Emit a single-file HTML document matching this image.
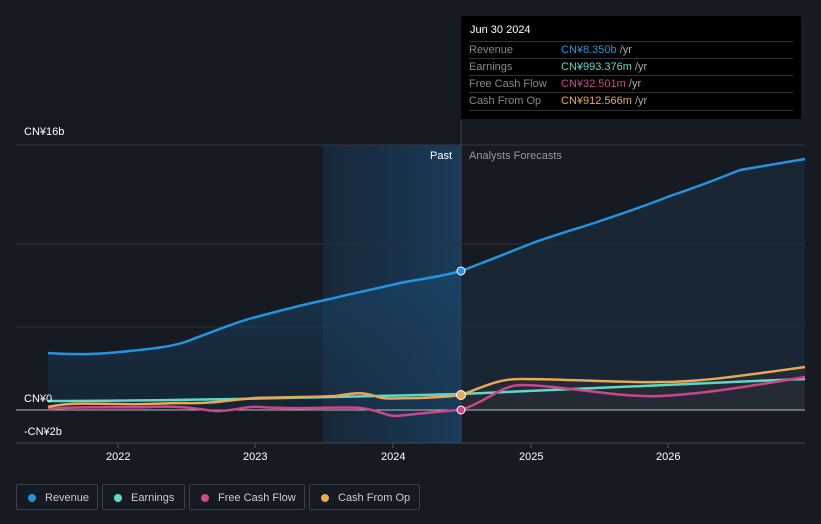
<!DOCTYPE html>
<html><head><meta charset="utf-8"><style>
body{margin:0;width:821px;height:524px;background:#151a23;font-family:"Liberation Sans",sans-serif;overflow:hidden;position:relative}
.t{position:absolute;font-size:11px;color:#fff}
.tip{position:absolute;left:461px;top:16px;width:340px;height:103px;background:#000;border-radius:2px}
.tip .h{position:absolute;left:9px;top:8px;font-size:11px;color:#fff}
.row{position:absolute;left:8px;width:324px;height:17px;border-top:1px solid #333;font-size:11px;line-height:17px;color:#888}
.row span{position:absolute;left:92px}
.row i{font-style:normal;color:#aaa}
.lg{position:absolute;top:484px;height:26px;border:1px solid #3a3f4a;border-radius:2px;font-size:11px;color:#ccc;line-height:26px;box-sizing:border-box}
.lg b{position:absolute;left:11px;top:9px;width:8px;height:8px;border-radius:50%}
.lg span{position:absolute;left:28px}
</style></head><body>
<svg width="821" height="524" style="position:absolute;left:0;top:0">
<defs><linearGradient id="g" x1="0" y1="0" x2="0" y2="1"><stop offset="0" stop-color="#1a4a70" stop-opacity=".55"/><stop offset="1" stop-color="#1a3a58" stop-opacity=".3"/></linearGradient>
<linearGradient id="pg" x1="0" y1="0" x2="1" y2="0"><stop offset="0" stop-color="#1a3550" stop-opacity=".5"/><stop offset="1" stop-color="#1a4468" stop-opacity=".8"/></linearGradient></defs>
<rect x="323" y="145" width="138" height="298" fill="url(#pg)"/>
<line x1="16" y1="145" x2="805" y2="145" stroke="#333a46"/>
<line x1="16" y1="244" x2="805" y2="244" stroke="#2a303b"/>
<line x1="16" y1="327" x2="805" y2="327" stroke="#2a303b"/>
<line x1="461" y1="120" x2="461" y2="443" stroke="#3a4250"/>
<path d="M48,353 C80,355 100,354 120,352 C150,349 170,347 185,342 C210,333 235,322 260,316 C290,308 320,301 330,299 C350,294 370,290 400,283 C420,279 440,277 461,271 L461,410 L48,410 Z" fill="url(#g)"/>
<path d="M461,271 C490,260 510,252 530,244 C560,233 580,228 600,221 C630,211 650,204 670,196 C700,186 720,178 740,170 L805,159 L805,410 L461,410Z" fill="#1c2e40" opacity=".6"/>
<path d="M461,395 C500,380 540,378 580,380 C660,383 700,382 740,376 C770,372 790,370 805,367 L805,410 L461,410Z" fill="#2a2e36" opacity=".7"/>
<line x1="16" y1="410" x2="805" y2="410" stroke="#bbb" stroke-width="1"/>
<line x1="16" y1="443" x2="805" y2="443" stroke="#444a55"/>
<g stroke="#555" ><line x1="118" y1="443" x2="118" y2="448"/><line x1="255" y1="443" x2="255" y2="448"/><line x1="393" y1="443" x2="393" y2="448"/><line x1="531" y1="443" x2="531" y2="448"/><line x1="668" y1="443" x2="668" y2="448"/></g>
<g fill="none" stroke-width="2.5">
<path d="M48,353 C80,355 100,354 120,352 C150,349 170,347 185,342 C210,333 235,322 260,316 C290,308 320,301 330,299 C350,294 370,290 400,283 C420,279 440,277 461,271 C490,260 510,252 530,244 C560,233 580,228 600,221 C630,211 650,204 670,196 C700,186 720,178 740,170 L805,159" stroke="#2394df"/>
<path d="M48,401 C150,401 300,398 461,394 C600,388 700,383 805,379" stroke="#5fd8c6"/>
<path d="M48,409 C80,406 120,408 150,407 C190,405 210,412 220,411 C240,410 245,406 260,407 C300,410 340,406 360,408 C380,410 385,416 395,416 C420,414 440,411 461,410 C490,400 500,386 520,385 C560,385 620,398 660,396 C700,394 740,388 805,377" stroke="#c9478a"/>
<path d="M48,407 C70,402 90,404 120,404 C150,405 160,403 185,403 C210,404 230,400 255,398 C290,397 320,397 335,396 C350,394 360,391 375,396 C385,400 395,398 420,398 C440,397 455,396 461,395 C490,384 500,379 520,379 C570,379 620,383 660,382 C700,382 740,376 805,367" stroke="#e8a857"/>
</g>
<circle cx="461" cy="271" r="4" fill="#2394df" stroke="#fff" stroke-width="1"/>
<circle cx="461" cy="395" r="4.5" fill="#e8a857" stroke="#fff" stroke-width="1"/>
<circle cx="461" cy="410" r="4" fill="#c9478a" stroke="#fff" stroke-width="1"/>
</svg>
<div class="t" style="left:24px;top:126px">CN¥16b</div>
<div class="t" style="left:24px;top:393px">CN¥0</div>
<div class="t" style="left:24px;top:426px">-CN¥2b</div>
<div class="t" style="left:430px;top:150px">Past</div>
<div class="t" style="left:469px;top:150px;color:#999">Analysts Forecasts</div>
<div class="t" style="left:106px;top:451px">2022</div>
<div class="t" style="left:243px;top:451px">2023</div>
<div class="t" style="left:381px;top:451px">2024</div>
<div class="t" style="left:519px;top:451px">2025</div>
<div class="t" style="left:656px;top:451px">2026</div>
<div class="tip"><div class="h">Jun 30 2024</div>
<div class="row" style="top:25px">Revenue<span><font color="#2394df">CN¥8.350b</font> <i>/yr</i></span></div>
<div class="row" style="top:42px">Earnings<span><font color="#5fd8c6">CN¥993.376m</font> <i>/yr</i></span></div>
<div class="row" style="top:59px">Free Cash Flow<span><font color="#c9478a">CN¥32.501m</font> <i>/yr</i></span></div>
<div class="row" style="top:76px;border-bottom:1px solid #333">Cash From Op<span><font color="#e8a857">CN¥912.566m</font> <i>/yr</i></span></div>
</div>
<div class="lg" style="left:16px;width:82px"><b style="background:#2394df"></b><span>Revenue</span></div>
<div class="lg" style="left:102px;width:83px"><b style="background:#5fd8c6"></b><span>Earnings</span></div>
<div class="lg" style="left:189px;width:116px"><b style="background:#c9478a"></b><span>Free Cash Flow</span></div>
<div class="lg" style="left:309px;width:111px"><b style="background:#e8a857"></b><span>Cash From Op</span></div>
</body></html>
